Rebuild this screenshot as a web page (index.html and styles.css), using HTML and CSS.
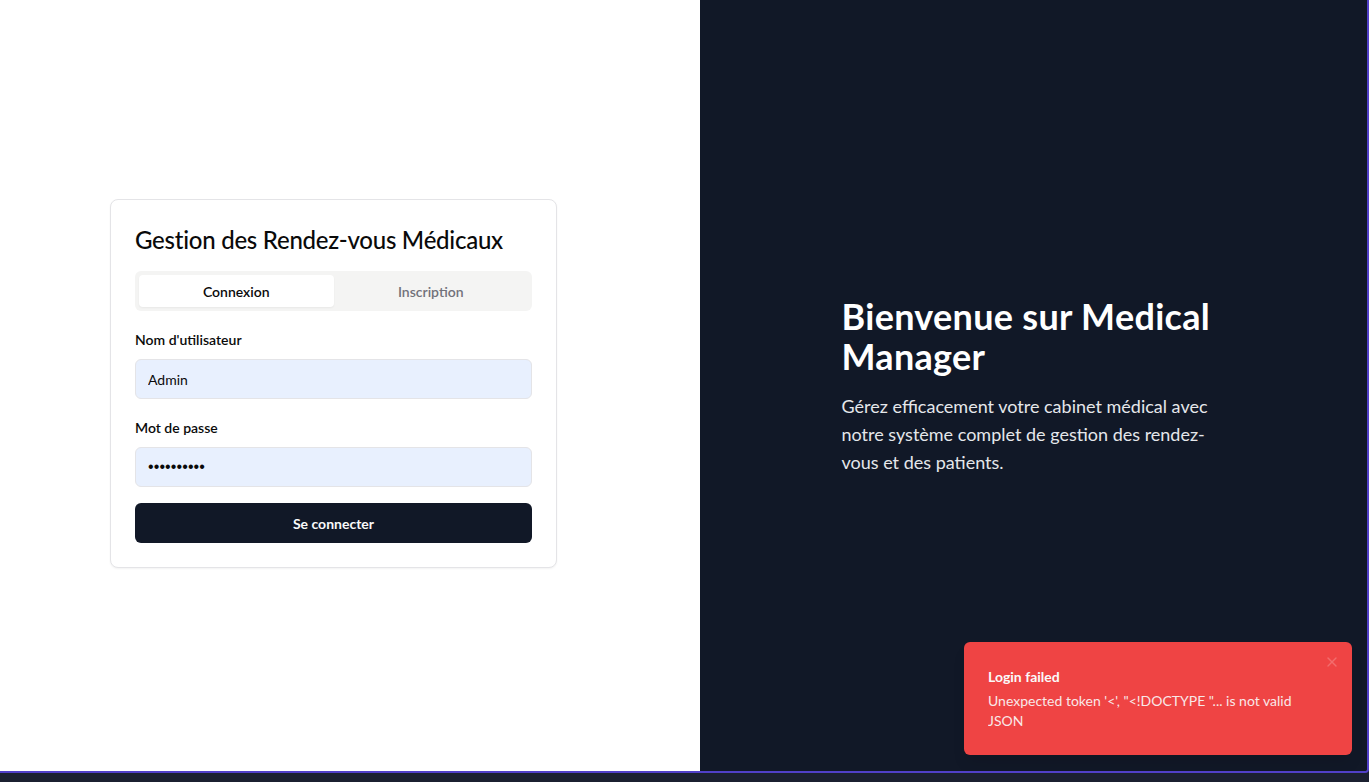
FILE: index.html
```html
<!DOCTYPE html>
<html lang="fr">
<head>
<meta charset="utf-8">
<title>Medical Manager</title>
<link rel="stylesheet" href="styles.css">
</head>
<body>
<div class="frame">
  <main class="split">
    <section class="left">
      <div class="card">
        <h1 class="card-title">Gestion des Rendez-vous Médicaux</h1>
        <div class="tabs">
          <button class="tab tab-active">Connexion</button>
          <button class="tab">Inscription</button>
        </div>
        <form class="form">
          <div class="field">
            <label class="label">Nom d'utilisateur</label>
            <input class="input" type="text" value="Admin">
          </div>
          <div class="field">
            <label class="label">Mot de passe</label>
            <input class="input input-password" type="password" value="abcdefghij">
          </div>
          <button class="submit" type="button">Se connecter</button>
        </form>
      </div>
    </section>
    <section class="right">
      <div class="hero">
        <h2 class="hero-title">Bienvenue sur Medical Manager</h2>
        <p class="hero-text">Gérez efficacement votre cabinet médical avec notre système complet de gestion des rendez-vous et des patients.</p>
      </div>
    </section>
  </main>
  <div class="toast">
    <div class="toast-title">Login failed</div>
    <div class="toast-desc">Unexpected token '&lt;', "&lt;!DOCTYPE "... is not valid JSON</div>
    <button class="toast-close" aria-label="Fermer">
      <svg width="16" height="16" viewBox="0 0 24 24" fill="none" stroke="currentColor" stroke-width="2" stroke-linecap="round" stroke-linejoin="round"><path d="M18 6 6 18"/><path d="m6 6 12 12"/></svg>
    </button>
  </div>
</div>
</body>
</html>
```
FILE: styles.css
```css
* { box-sizing: border-box; }
html, body { margin: 0; padding: 0; }
body {
  background: #1b2030;
  font-family: "Lato", "Noto Sans", sans-serif;
  color: #0a0a0a;
  height: 782px;
  overflow: hidden;
}
.frame {
  position: relative;
  height: 773px;
  width: 1369px;
  border-right: 2px solid #5140c8;
  border-bottom: 2px solid #5140c8;
  border-bottom-right-radius: 4px;
  overflow: hidden;
}
.split {
  display: flex;
  height: 100%;
}
.left {
  width: 700px;
  background: #ffffff;
  display: flex;
  align-items: center;
  padding-left: 110px;
  padding-bottom: 4px;
}
.card {
  width: 447px;
  border: 1px solid #e4e4e7;
  border-radius: 8px;
  background: #fff;
  box-shadow: 0 1px 2px rgba(0,0,0,0.05);
  padding: 24px;
}
.card-title {
  margin: 0 0 15px;
  font-size: 24px;
  line-height: 32px;
  font-weight: 500;
  letter-spacing: -0.25px;
  color: #0a0a0a;
}
.tabs {
  display: flex;
  background: #f4f4f3;
  border-radius: 6px;
  padding: 4px;
  height: 40px;
}
.tab {
  flex: 1;
  border: 0;
  background: transparent;
  font-family: inherit;
  font-size: 14px;
  font-weight: 600;
  color: #71717a;
  border-radius: 4px;
  cursor: pointer;
}
.tab-active {
  background: #fff;
  color: #0a0a0a;
  box-shadow: 0 1px 2px rgba(0,0,0,0.05);
}
.form {
  display: flex;
  flex-direction: column;
  gap: 19px;
  margin-top: 19px;
}
.field {
  display: flex;
  flex-direction: column;
  gap: 9px;
}
.label {
  font-size: 14px;
  line-height: 20px;
  font-weight: 600;
  color: #0a0a0a;
}
.input {
  height: 40px;
  border: 1px solid #e4e4e7;
  border-radius: 6px;
  background: #e8f0fe;
  padding: 0 12px;
  font-family: inherit;
  font-size: 14px;
  color: #0a0a0a;
}
.input-password {
  font-family: "Liberation Sans", sans-serif;
  font-size: 16px;
  letter-spacing: 0.1px;
}
.submit {
  margin-top: -3px;
  height: 40px;
  border: 0;
  border-radius: 6px;
  background: #111827;
  color: #fafafa;
  font-family: inherit;
  font-size: 14px;
  font-weight: 700;
}
.right {
  flex: 1;
  background: #111827;
  display: flex;
  align-items: center;
  justify-content: center;
}
.hero {
  width: 384px;
  color: #fff;
}
.hero-title {
  margin: 0 0 16px;
  font-size: 36px;
  line-height: 40px;
  font-weight: 700;
  letter-spacing: 0.3px;
}
.hero-text {
  margin: 0;
  font-size: 18px;
  line-height: 28px;
  color: #e5e7eb;
}
.toast {
  position: absolute;
  right: 15px;
  bottom: 16px;
  width: 388px;
  background: #ef4444;
  color: #fafafa;
  border-radius: 6px;
  padding: 25px 32px 24px 24px;
  display: grid;
  gap: 4px;
  box-shadow: 0 10px 15px -3px rgba(0,0,0,0.1);
}
.toast-title {
  font-size: 14px;
  line-height: 20px;
  font-weight: 700;
}
.toast-desc {
  font-size: 14px;
  line-height: 20px;
  opacity: 0.9;
}
.toast-close {
  position: absolute;
  top: 8px;
  right: 8px;
  padding: 4px;
  border: 0;
  background: transparent;
  color: #fecaca;
  opacity: 0.3;
  display: flex;
}
```
